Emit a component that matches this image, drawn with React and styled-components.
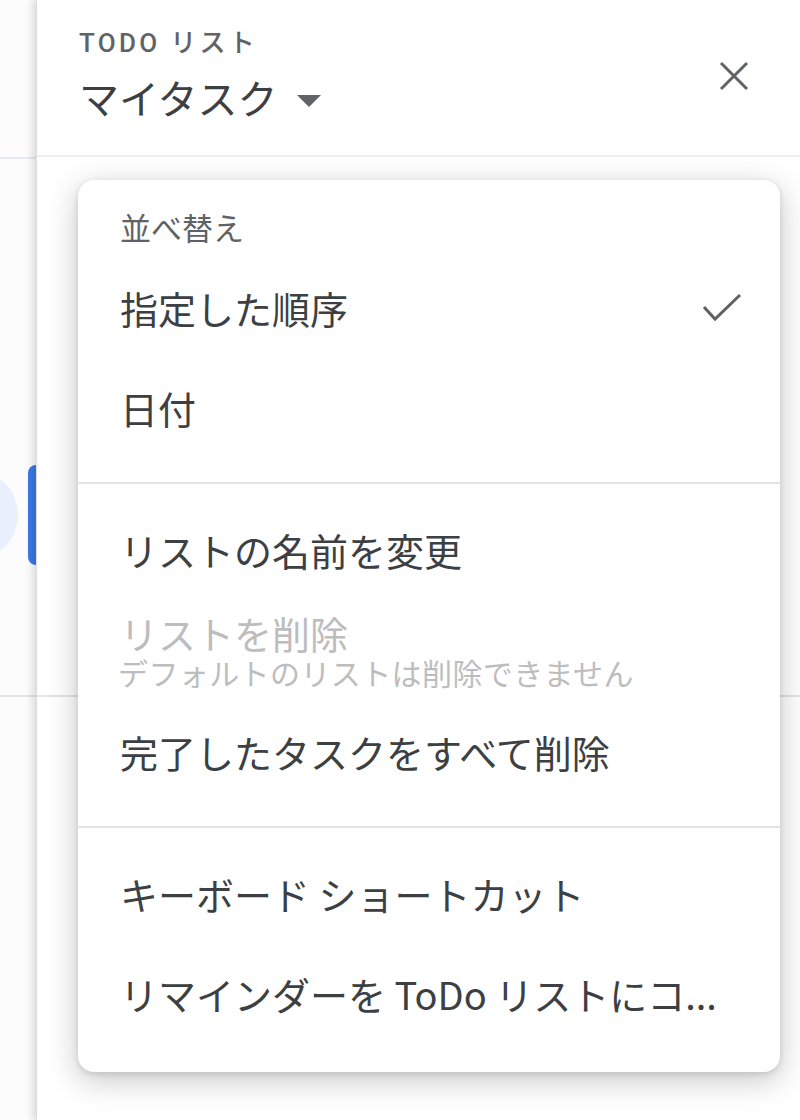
import React from "react";
import styled, { createGlobalStyle } from "styled-components";

const Global = createGlobalStyle`
  html, body { margin: 0; padding: 0; background: #ffffff; }
  body { font-family: "Noto Sans CJK JP", "Noto Sans", sans-serif; }
  #root { height: 1120px; }
`;

const Page = styled.div`
  display: flex;
  height: 1120px;
  overflow: hidden;
  background: #ffffff;
`;

const Rail = styled.div`
  width: 36px;
  flex: none;
  display: flex;
  flex-direction: column;
  background: #fcfcfc;
  overflow: hidden;
`;

const RailTop = styled.div`
  height: 157px;
  flex: none;
  border-bottom: 2px solid #e6e9ee;
`;

const RailNav = styled.div`
  height: 536px;
  flex: none;
  display: flex;
  flex-direction: column;
  border-bottom: 2px solid #e4e4e4;
`;

const NavItem = styled.div`
  margin-top: 306px;
  height: 100px;
  display: flex;
  align-items: center;
  justify-content: space-between;
`;

const NavBubble = styled.div`
  width: 90px;
  height: 90px;
  margin-left: -72px;
  border-radius: 50%;
  background: #e8f0fe;
`;

const NavBar = styled.div`
  width: 8px;
  height: 100px;
  align-self: flex-start;
  border-radius: 8px 0 0 8px;
  background: #3b78e7;
`;

const Panel = styled.div`
  flex: 1;
  display: flex;
  flex-direction: column;
  border-left: 1px solid #dcdcdc;
  box-shadow: -4px 0 7px rgba(0, 0, 0, 0.13);
  position: relative;
  z-index: 1;
  background: #ffffff;
`;

const Header = styled.header`
  height: 157px;
  flex: none;
  box-sizing: border-box;
  display: flex;
  justify-content: space-between;
  align-items: flex-start;
  padding: 28px 42px 0 42px;
  border-bottom: 2px solid #eceef1;
`;

const TitleBlock = styled.div`
  display: flex;
  flex-direction: column;
`;

const Eyebrow = styled.div`
  font-family: "Roboto", "Noto Sans CJK JP", sans-serif;
  font-weight: 500;
  font-size: 26px;
  line-height: 30px;
  letter-spacing: 3.3px;
  color: #5f6368;
`;

const ListTitle = styled.button`
  margin-top: 14px;
  padding: 0;
  border: none;
  background: none;
  display: flex;
  align-items: center;
  gap: 20px;
  font-family: "Noto Sans CJK JP", sans-serif;
  font-size: 40px;
  line-height: 50px;
  color: #3c4043;
  cursor: pointer;
`;

const IconButton = styled.button`
  width: 48px;
  height: 48px;
  margin-top: 24px;
  padding: 0;
  border: none;
  background: none;
  display: flex;
  align-items: center;
  justify-content: center;
  cursor: pointer;
`;

const Body = styled.div`
  flex: 1;
  position: relative;
`;

const TaskArea = styled.div`
  height: 538px;
  border-bottom: 2px solid #e4e4e4;
`;

const Menu = styled.div`
  position: absolute;
  top: 23px;
  left: 41px;
  width: 702px;
  background: #ffffff;
  border-radius: 16px;
  box-shadow: 0 2px 6px rgba(0, 0, 0, 0.12), 0 8px 30px 2px rgba(0, 0, 0, 0.2);
  display: flex;
  flex-direction: column;
`;

const Section = styled.div`
  padding: ${(p) => (p.$first ? "14px" : "16px")} 0 ${(p) => (p.$last ? "28px" : "24px")};
  border-bottom: ${(p) => (p.$last ? "none" : "2px solid #e3e3e3")};
  display: flex;
  flex-direction: column;
`;

const SectionLabel = styled.div`
  height: 64px;
  padding: 0 42px;
  display: flex;
  align-items: center;
  font-size: 31px;
  color: #5f6368;
`;

const Item = styled.div`
  height: ${(p) => (p.$tall ? "102px" : "100px")};
  padding: 0 38px 0 42px;
  display: flex;
  align-items: center;
  justify-content: space-between;
  cursor: ${(p) => (p.$disabled ? "default" : "pointer")};
`;

const ItemText = styled.div`
  display: flex;
  flex-direction: column;
`;

const ItemLabel = styled.span`
  font-size: 38px;
  line-height: 42px;
  color: ${(p) => (p.$disabled ? "#bdbdbd" : "#3c4043")};
  white-space: nowrap;
`;

const ItemHint = styled.span`
  font-size: 30px;
  line-height: 36px;
  letter-spacing: 0.4px;
  color: #bdbdbd;
  margin-left: -2px;
  white-space: nowrap;
`;

const Caret = () => (
  <svg width="24" height="12" viewBox="0 0 24 12" style={{ marginTop: 8 }}>
    <path d="M0 0 L24 0 L12 12 Z" fill="#5f6368" />
  </svg>
);

const CloseIcon = () => (
  <svg width="30" height="30" viewBox="0 0 30 30">
    <path d="M2 2 L28 28 M28 2 L2 28" stroke="#5f6368" strokeWidth="3" fill="none" />
  </svg>
);

const Check = () => (
  <svg width="40" height="30" viewBox="0 0 40 30">
    <path d="M2 14 L13 26 L38 2" stroke="#616161" strokeWidth="3" fill="none" />
  </svg>
);

export default function App() {
  return (
    <>
      <Global />
      <Page>
        <Rail>
          <RailTop />
          <RailNav>
            <NavItem>
              <NavBubble />
              <NavBar />
            </NavItem>
          </RailNav>
        </Rail>
        <Panel>
          <Header>
            <TitleBlock>
              <Eyebrow>TODO リスト</Eyebrow>
              <ListTitle>
                マイタスク
                <Caret />
              </ListTitle>
            </TitleBlock>
            <IconButton aria-label="閉じる">
              <CloseIcon />
            </IconButton>
          </Header>
          <Body>
            <TaskArea />
            <Menu>
              <Section $first>
                <SectionLabel>並べ替え</SectionLabel>
                <Item>
                  <ItemLabel>指定した順序</ItemLabel>
                  <Check />
                </Item>
                <Item>
                  <ItemLabel>日付</ItemLabel>
                </Item>
              </Section>
              <Section>
                <Item>
                  <ItemLabel>リストの名前を変更</ItemLabel>
                </Item>
                <Item $tall $disabled>
                  <ItemText>
                    <ItemLabel $disabled>リストを削除</ItemLabel>
                    <ItemHint>デフォルトのリストは削除できません</ItemHint>
                  </ItemText>
                </Item>
                <Item>
                  <ItemLabel>完了したタスクをすべて削除</ItemLabel>
                </Item>
              </Section>
              <Section $last>
                <Item>
                  <ItemLabel>キーボード ショートカット</ItemLabel>
                </Item>
                <Item>
                  <ItemLabel>リマインダーを ToDo リストにコ...</ItemLabel>
                </Item>
              </Section>
            </Menu>
          </Body>
        </Panel>
      </Page>
    </>
  );
}
